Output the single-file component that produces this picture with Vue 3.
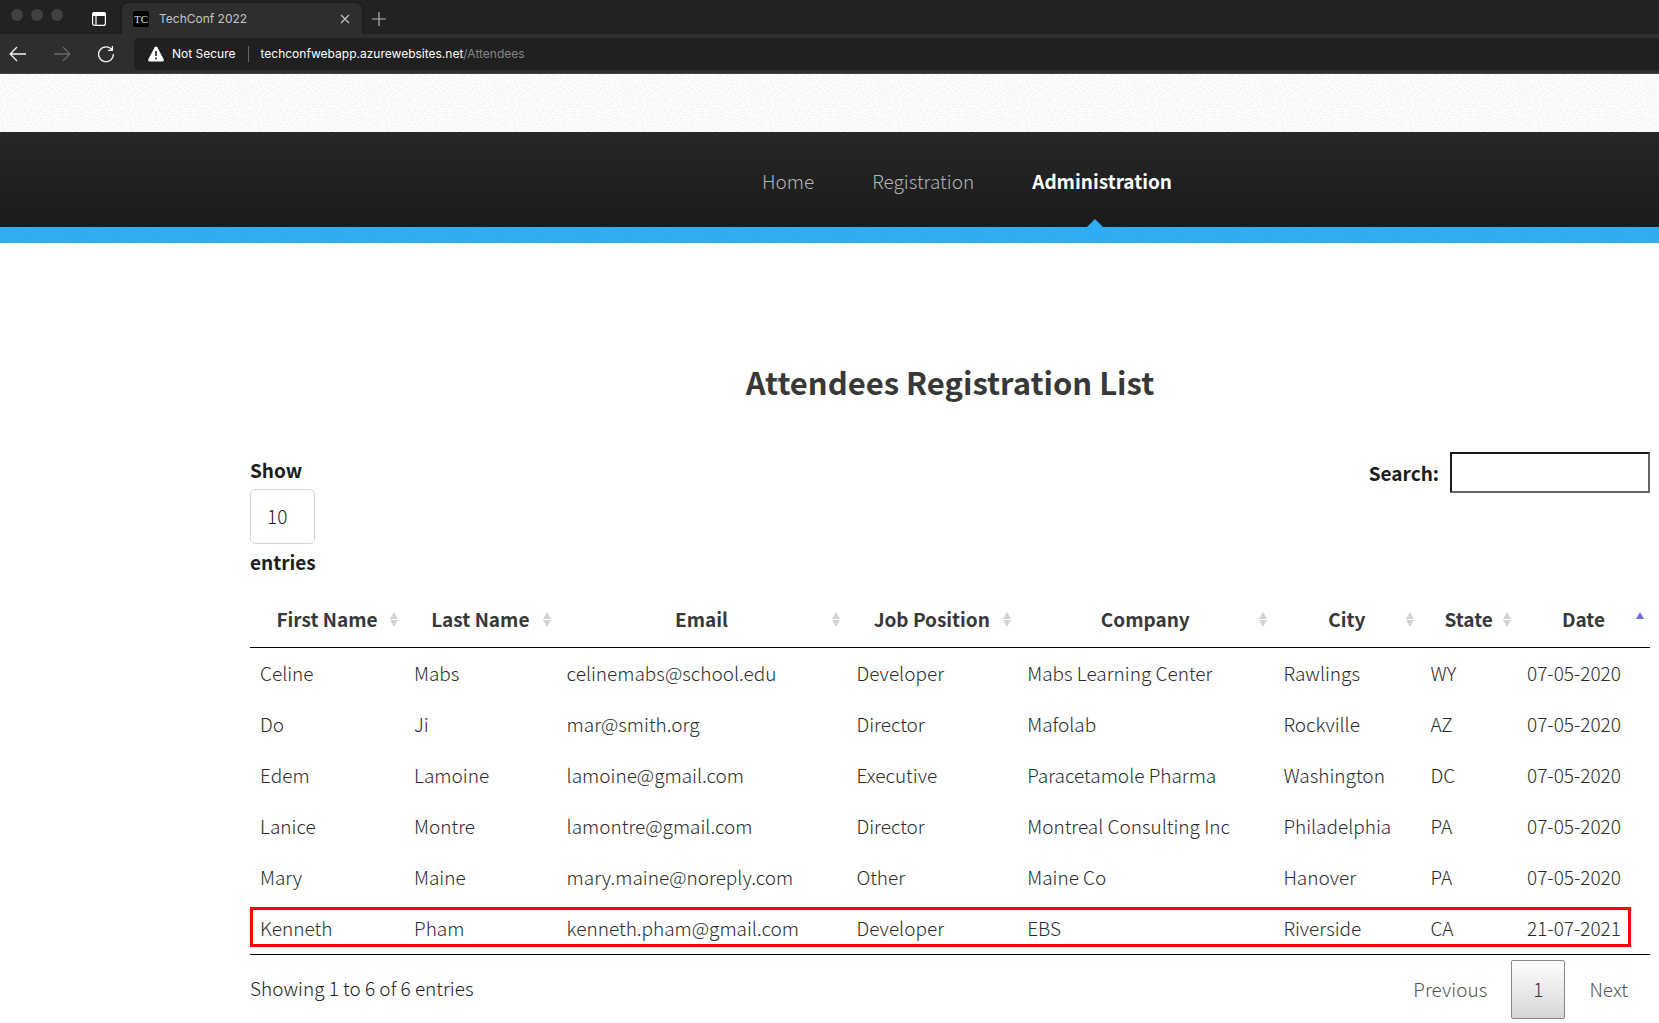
<script setup>
import { ref, computed } from 'vue'

const columns = [
  { key: 'first', label: 'First Name', width: '11%' },
  { key: 'last', label: 'Last Name', width: '10.9%' },
  { key: 'email', label: 'Email', width: '20.7%' },
  { key: 'job', label: 'Job Position', width: '12.2%' },
  { key: 'company', label: 'Company', width: '18.3%' },
  { key: 'city', label: 'City', width: '10.5%' },
  { key: 'state', label: 'State', width: '6.9%' },
  { key: 'date', label: 'Date', width: '9.5%', sorted: true }
]

const attendees = [
  { first: 'Celine', last: 'Mabs', email: 'celinemabs@school.edu', job: 'Developer', company: 'Mabs Learning Center', city: 'Rawlings', state: 'WY', date: '07-05-2020' },
  { first: 'Do', last: 'Ji', email: 'mar@smith.org', job: 'Director', company: 'Mafolab', city: 'Rockville', state: 'AZ', date: '07-05-2020' },
  { first: 'Edem', last: 'Lamoine', email: 'lamoine@gmail.com', job: 'Executive', company: 'Paracetamole Pharma', city: 'Washington', state: 'DC', date: '07-05-2020' },
  { first: 'Lanice', last: 'Montre', email: 'lamontre@gmail.com', job: 'Director', company: 'Montreal Consulting Inc', city: 'Philadelphia', state: 'PA', date: '07-05-2020' },
  { first: 'Mary', last: 'Maine', email: 'mary.maine@noreply.com', job: 'Other', company: 'Maine Co', city: 'Hanover', state: 'PA', date: '07-05-2020' },
  { first: 'Kenneth', last: 'Pham', email: 'kenneth.pham@gmail.com', job: 'Developer', company: 'EBS', city: 'Riverside', state: 'CA', date: '21-07-2021', marked: true }
]

const query = ref('')
const rows = computed(() =>
  attendees.filter((a) => Object.values(a).join(' ').toLowerCase().includes(query.value.toLowerCase()))
)
</script>

<template>
  <div class="window">
    <header class="browser">
      <div class="tabs">
        <div class="lights"><i></i><i></i><i></i></div>
        <button class="icon panel" aria-label="Tab actions">
          <svg width="16" height="16" viewBox="0 0 16 16" fill="none" stroke="#fff" stroke-width="1.2">
            <rect x="1.6" y="1.6" width="12.8" height="12.8" rx="2" />
            <path d="M1.6 4.4V3a1.5 1.5 0 0 1 1.5-1.4h9.8A1.5 1.5 0 0 1 14.4 3v1.4z" fill="#fff" />
            <path d="M5 5v9.4" />
          </svg>
        </button>
        <div class="tab">
          <span class="favicon">TC</span>
          <span class="tab-title">TechConf 2022</span>
          <button class="icon" aria-label="Close tab">
            <svg width="10" height="10" viewBox="0 0 10 10" stroke="#c4c4c4" stroke-width="1.2"><path d="M1 1l8 8M9 1l-8 8" /></svg>
          </button>
        </div>
        <button class="icon new-tab" aria-label="New tab">
          <svg width="14" height="14" viewBox="0 0 14 14" stroke="#b5b5b5" stroke-width="1.2"><path d="M7 0v14M0 7h14" /></svg>
        </button>
      </div>
      <div class="toolbar">
        <div class="history">
          <button class="icon" aria-label="Back">
            <svg width="18" height="16" viewBox="0 0 18 16" fill="none" stroke="#f2f2f2" stroke-width="1.3"><path d="M8 1L1.2 8 8 15M1.5 8H17" /></svg>
          </button>
          <button class="icon" aria-label="Forward">
            <svg width="18" height="16" viewBox="0 0 18 16" fill="none" stroke="#686868" stroke-width="1.3"><path d="M10 1l6.8 7L10 15M16.5 8H1" /></svg>
          </button>
          <button class="icon" aria-label="Reload">
            <svg width="18" height="18" viewBox="0 0 18 18" fill="none" stroke="#f2f2f2" stroke-width="1.3"><path d="M11 5.3h4.4V1M15.2 5.2A7.4 7.4 0 1 0 16.4 9" /></svg>
          </button>
        </div>
        <div class="address">
          <svg width="16" height="16" viewBox="0 0 16 16"><path d="M8 .5c.6 0 1 .3 1.3.8l6.4 12c.5 1-.1 2.2-1.3 2.2H1.6c-1.2 0-1.8-1.2-1.3-2.2l6.4-12C7 .8 7.4.5 8 .5z" fill="#fff" /><path d="M8 5v5M8 11.6v1.6" stroke="#202020" stroke-width="1.6" /></svg>
          <span class="insecure">Not Secure</span>
          <span class="url">techconfwebapp.azurewebsites.net<span class="path">/Attendees</span></span>
        </div>
      </div>
    </header>

    <div class="banner grain"></div>
    <nav class="site-nav">
      <a href="#">Home</a>
      <a href="#">Registration</a>
      <a href="#" class="current">Administration</a>
    </nav>
    <div class="stripe grain"></div>

    <main>
      <h1>Attendees Registration List</h1>
      <div class="controls">
        <label class="length">
          Show
          <select><option>10</option><option>25</option><option>50</option></select>
          entries
        </label>
        <label class="search">Search: <input v-model="query" type="search" /></label>
      </div>

      <table>
        <colgroup><col v-for="c in columns" :key="c.key" :style="{ width: c.width }" /></colgroup>
        <thead>
          <tr>
            <th v-for="c in columns" :key="c.key" scope="col">
              {{ c.label }}
              <svg class="sort" width="8" height="16" viewBox="0 0 8 16">
                <path d="M4 1l4 7H0z" :fill="c.sorted ? '#6b6be0' : '#d3d3d3'" />
                <path v-if="!c.sorted" d="M0 9h8l-4 7z" fill="#d3d3d3" />
              </svg>
            </th>
          </tr>
        </thead>
        <tbody>
          <tr v-for="row in rows" :key="row.email" :class="{ marked: row.marked }">
            <td v-for="c in columns" :key="c.key">{{ row[c.key] }}</td>
          </tr>
        </tbody>
      </table>

      <footer>
        <span>Showing 1 to 6 of 6 entries</span>
        <div class="pages">
          <button>Previous</button>
          <button class="active">1</button>
          <button>Next</button>
        </div>
      </footer>
    </main>
  </div>
</template>

<style>
body { background: #fff; }
</style>

<style scoped>
* { box-sizing: border-box; }
.window {
  font: 300 19px/30px "Noto Sans CJK SC", "Noto Sans", sans-serif;
  color: #1c1c1c;
}
button { font: inherit; color: inherit; background: none; border: 0; padding: 0; }
.browser { font: 400 12px/16px Inter, sans-serif; background: #222; }
.icon { display: flex; }
.tabs { display: flex; align-items: center; height: 34px; }
.lights { display: flex; gap: 8px; padding: 0 0 4px 11px; }
.lights i { width: 12px; height: 12px; border-radius: 50%; background: #414141; }
.panel { margin: 4px 0 0 28px; }
.tab {
  display: flex;
  align-items: center;
  width: 240px;
  height: 31px;
  margin: 3px 0 0 15px;
  padding: 0 12px 0 11px;
  border-radius: 6px 6px 0 0;
  background: #2e2e2e;
  box-shadow: 0 0 2px #111;
  color: #c6c6c6;
}
.favicon {
  width: 16px;
  margin-right: 10px;
  border-radius: 2px;
  background: #000;
  color: #ddd;
  font: 11px/16px "Liberation Serif", serif;
  text-align: center;
}
.tab-title { flex: 1; }
.new-tab { margin: 3px 0 0 10px; }
.toolbar {
  position: relative;
  display: flex;
  align-items: center;
  height: 40px;
  background: #2e2e2e;
  border-bottom: 1px solid #444;
}
.history { display: flex; align-items: center; gap: 26px; width: 134px; padding-left: 9px; }
.address {
  flex: 1;
  display: flex;
  align-items: center;
  height: 32px;
  padding-left: 14px;
  border-radius: 5px 0 0 5px;
  background: #202020;
  color: #fff;
}
.insecure { margin-left: 8px; padding-right: 12px; border-right: 1px solid #666; }
.url { padding-left: 12px; }
.path { color: #858585; }

.grain {
  background-image: url("data:image/svg+xml,%3Csvg xmlns='http://www.w3.org/2000/svg' width='128' height='128'%3E%3Cfilter id='n'%3E%3CfeTurbulence type='fractalNoise' baseFrequency='.7' numOctaves='2' stitchTiles='stitch'/%3E%3CfeColorMatrix values='0 0 0 0 0 0 0 0 0 0 0 0 0 0 0 .16 0 0 0 -.06'/%3E%3C/filter%3E%3Crect width='128' height='128' filter='url(%23n)'/%3E%3C/svg%3E");
}
.banner { height: 58px; background-color: #fff; }
.site-nav {
  display: flex;
  justify-content: center;
  gap: 58px;
  padding: 34px 9px 31px 284px;
  background: linear-gradient(#272727, #1b1b1b);
}
.site-nav a { position: relative; color: #b4b4b4; text-decoration: none; }
.site-nav .current { color: #fff; font-weight: 700; }
.current::after {
  content: "";
  position: absolute;
  left: 55px;
  bottom: -31px;
  border: 8px solid transparent;
  border-top: 0;
  border-bottom-color: #2eacf5;
}
.stripe { height: 16px; background-color: #30b0fb; }

main { padding: 109px 9px 4px 250px; }
h1 { margin: 0; font-size: 31px; line-height: 60px; font-weight: 700; text-align: center; color: #383838; }
.controls { display: flex; justify-content: space-between; align-items: flex-start; margin-top: 40px; font-weight: 700; }
.length { display: flex; flex-direction: column; line-height: 35px; }
select {
  appearance: none;
  width: 65px;
  height: 55px;
  margin-top: 2px;
  padding: 0 16px 2px;
  border: 1px solid #d4d4d4;
  border-radius: 5px;
  background: #fff;
  color: #222;
  font: inherit;
  font-weight: 300;
}
.search { display: flex; align-items: center; gap: 11px; }
input {
  appearance: none;
  width: 200px;
  height: 41px;
  padding: 0 8px;
  border: 2px solid;
  border-color: #1a1a1a #666 #666 #1a1a1a;
  border-radius: 1px;
  background: #fff;
  font: inherit;
  font-weight: 300;
}
table {
  width: 100%;
  margin-top: 14px;
  table-layout: fixed;
  border-collapse: separate;
  border-spacing: 0;
  border-bottom: 1px solid #000;
  color: #2c2c2c;
}
th { position: relative; padding: 11px 0 13px; border-bottom: 1px solid #000; font-weight: 700; color: #383838; }
td { height: 51px; padding: 0 10px 2px; white-space: nowrap; }
.sort { position: absolute; right: 6px; top: 18px; }
.marked { position: relative; }
.marked::after {
  content: "";
  position: absolute;
  inset: 4px 19px 7px 0;
  border: 3px solid #f00;
}
footer { display: flex; justify-content: space-between; align-items: center; margin-top: 5px; }
footer span { padding-bottom: 4px; }
.pages { display: flex; color: #555; }
.pages button { height: 59px; padding: 0 21px 2px; border: 1px solid transparent; border-radius: 2px; }
.pages .active { margin: 0 2px; border-color: #888; background: linear-gradient(#fff, #d5d5d5); color: #333; }
</style>
